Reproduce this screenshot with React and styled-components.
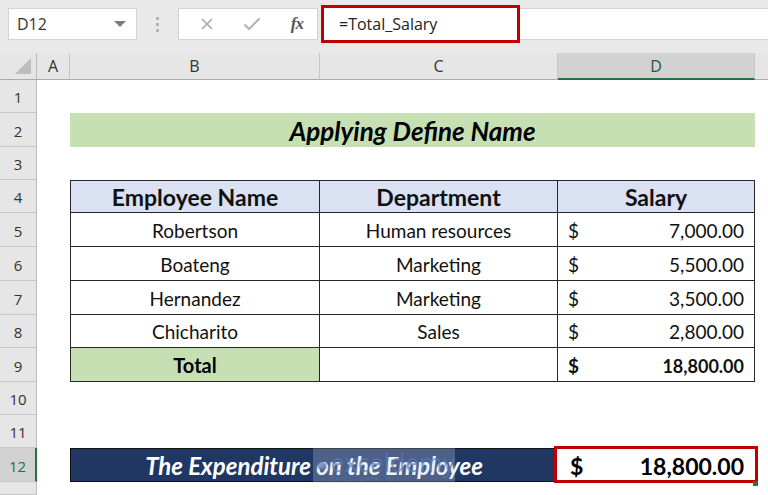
import React from 'react';
import styled, { createGlobalStyle } from 'styled-components';

const GlobalStyle = createGlobalStyle`
  html, body {
    margin: 0;
    padding: 0;
    background: #ffffff;
    overflow: hidden;
  }
  * {
    box-sizing: border-box;
  }
`;

const rowHeights = [33, 34, 33, 33, 34, 34, 34, 33, 34, 33, 33, 34];

const employees = [
  { name: 'Robertson', dept: 'Human resources', salary: '7,000.00' },
  { name: 'Boateng', dept: 'Marketing', salary: '5,500.00' },
  { name: 'Hernandez', dept: 'Marketing', salary: '3,500.00' },
  { name: 'Chicharito', dept: 'Sales', salary: '2,800.00' },
];

const App = () => {
  return (
    <Window>
      <GlobalStyle />
      <TopBar>
        <NameBox>
          <span>D12</span>
          <DropArrow />
        </NameBox>
        <Dots>
          <i />
          <i />
          <i />
        </Dots>
        <FxBox>
          <svg width="14" height="14" viewBox="0 0 14 14">
            <path d="M2 2 L12 12 M12 2 L2 12" stroke="#a8a8a8" strokeWidth="1.6" fill="none" />
          </svg>
          <svg width="18" height="14" viewBox="0 0 18 14">
            <path d="M1.5 7.5 L6 12 L16.5 1.5" stroke="#b4b4b4" strokeWidth="2.2" fill="none" />
          </svg>
          <FxLabel>fx</FxLabel>
        </FxBox>
        <FormulaField>
          <Highlight>=Total_Salary</Highlight>
        </FormulaField>
      </TopBar>

      <Sheet>
        <Corner>
          <svg width="16" height="16" viewBox="0 0 16 16">
            <path d="M16 0 L16 16 L0 16 Z" fill="#bdbdbd" />
          </svg>
        </Corner>
        {['A', 'B', 'C', 'D'].map((c) => (
          <ColHead key={c} $active={c === 'D'}>{c}</ColHead>
        ))}
        <ColHead $last />

        {rowHeights.map((_, i) => (
          <RowHead key={i} $row={i + 2} $active={i === 11}>{i + 1}</RowHead>
        ))}
        <RowHead $row={14} />

        <Title>Applying Define Name</Title>

        <HeadCell $row={5} $col={3} $left>Employee Name</HeadCell>
        <HeadCell $row={5} $col={4}>Department</HeadCell>
        <HeadCell $row={5} $col={5}>Salary</HeadCell>

        {employees.map((e, i) => (
          <React.Fragment key={e.name}>
            <BodyCell $row={i + 6} $col={3} $left>{e.name}</BodyCell>
            <BodyCell $row={i + 6} $col={4}>{e.dept}</BodyCell>
            <MoneyCell $row={i + 6}>
              <span>$</span>
              <span>{e.salary}</span>
            </MoneyCell>
          </React.Fragment>
        ))}

        <TotalLabel>Total</TotalLabel>
        <BodyCell $row={10} $col={4} />
        <MoneyCell $row={10} $bold>
          <span>$</span>
          <span>18,800.00</span>
        </MoneyCell>

        <Banner>The Expenditure on the Employee</Banner>
        <ResultCell>
          <ResultBox>
            <span>$</span>
            <span>18,800.00</span>
          </ResultBox>
          <FillHandle />
        </ResultCell>

        <Watermark>
          <svg width="30" height="30" viewBox="0 0 30 30">
            <path d="M15 2 L27 9 L27 22 L15 29 L3 22 L3 9 Z" fill="#5d76a8" opacity="0.7" />
            <path d="M15 9 L21 12.5 L21 19 L15 22.5 L9 19 L9 12.5 Z" fill="#8ea2c8" opacity="0.6" />
          </svg>
          <WatermarkText>
            exceldemy
            <small>EXCEL · DATA · BI</small>
          </WatermarkText>
        </Watermark>
      </Sheet>
    </Window>
  );
};

// styled components
const Window = styled.div`
  width: 768px;
  height: 495px;
  display: flex;
  flex-direction: column;
  background: #e9e9e9;
  font-family: 'Open Sans', 'Noto Sans', sans-serif;
  color: #222;
  overflow: hidden;
`;

const TopBar = styled.div`
  height: 53px;
  flex-shrink: 0;
  display: flex;
  align-items: flex-start;
  padding: 8px 0 0 8px;
  background: #e9e9e9;
`;

const NameBox = styled.div`
  width: 129px;
  height: 32px;
  display: flex;
  align-items: center;
  justify-content: space-between;
  padding: 0 10px 0 8px;
  background: #fff;
  border: 1px solid #d4d4d4;
  font-size: 16px;
  color: #333;
`;

const DropArrow = styled.i`
  width: 0;
  height: 0;
  border-left: 6px solid transparent;
  border-right: 6px solid transparent;
  border-top: 6px solid #7a7a7a;
`;

const Dots = styled.div`
  width: 41px;
  height: 32px;
  display: flex;
  flex-direction: column;
  align-items: center;
  justify-content: center;
  gap: 3px;

  i {
    width: 3px;
    height: 3px;
    background: #b5b5b5;
  }
`;

const FxBox = styled.div`
  width: 140px;
  height: 32px;
  display: flex;
  align-items: center;
  justify-content: space-between;
  padding: 0 14px 0 21px;
  background: #fff;
  border: 1px solid #d4d4d4;
`;

const FxLabel = styled.span`
  font-family: 'Liberation Serif', serif;
  font-style: italic;
  font-weight: bold;
  font-size: 17px;
  color: #555;
  letter-spacing: -1px;
`;

const FormulaField = styled.div`
  flex: 1;
  height: 32px;
  margin-left: 3px;
  background: #fff;
  border-top: 1px solid #d4d4d4;
  border-bottom: 1px solid #d4d4d4;
`;

const Highlight = styled.div`
  width: 199px;
  height: 38px;
  margin-top: -4px;
  display: flex;
  align-items: center;
  padding-left: 15px;
  border: 3px solid #c00000;
  background: #fff;
  font-size: 16px;
  color: #222;
`;

const Sheet = styled.div`
  position: relative;
  flex: 1;
  display: grid;
  grid-template-columns: 37px 33px 250px 238px 197px 1fr;
  grid-template-rows: 27px ${rowHeights.map((h) => `${h}px`).join(' ')} 1fr;
  background: #fff;
  font-family: 'Lato', 'Open Sans', sans-serif;
`;

const Corner = styled.div`
  grid-row: 1;
  grid-column: 1;
  display: flex;
  align-items: flex-end;
  justify-content: flex-end;
  padding: 0 5px 5px 0;
  background: #e6e6e6;
  border-right: 1px solid #bcbcbc;
  border-bottom: 1px solid #ababab;
`;

const ColHead = styled.div`
  display: flex;
  align-items: center;
  justify-content: center;
  background: ${(p) => (p.$active ? '#d2d2d2' : '#e6e6e6')};
  border-right: ${(p) => (p.$last ? 'none' : '1px solid #c6c6c6')};
  border-bottom: ${(p) => (p.$active ? '2px solid #217346' : '1px solid #ababab')};
  font-family: 'Open Sans', sans-serif;
  font-size: 16px;
  color: ${(p) => (p.$active ? '#1e5b35' : '#333')};
`;

const RowHead = styled.div`
  grid-row: ${(p) => p.$row};
  grid-column: 1;
  display: flex;
  align-items: center;
  justify-content: center;
  padding-top: 2px;
  background: ${(p) => (p.$active ? '#d2d2d2' : '#e6e6e6')};
  border-right: ${(p) => (p.$active ? '2px solid #217346' : '1px solid #bcbcbc')};
  border-bottom: 1px solid #c8c8c8;
  font-family: 'Open Sans', sans-serif;
  font-size: 15px;
  color: ${(p) => (p.$active ? '#217346' : '#333')};
`;

const Title = styled.div`
  grid-row: 3;
  grid-column: 3 / 6;
  display: flex;
  align-items: center;
  justify-content: center;
  padding-top: 1px;
  background: #c6e0b4;
  font-size: 26px;
  font-weight: 700;
  font-style: italic;
  color: #000;
`;

const Cell = styled.div`
  grid-row: ${(p) => p.$row};
  grid-column: ${(p) => p.$col};
  display: flex;
  justify-content: center;
  border-right: 1px solid #262626;
  border-bottom: 1px solid #262626;
  border-left: ${(p) => (p.$left ? '1px solid #262626' : 'none')};
`;

const HeadCell = styled(Cell)`
  align-items: center;
  background: #d9e1f2;
  border-top: 1px solid #262626;
  font-size: 23px;
  font-weight: 700;
  color: #111;
`;

const BodyCell = styled(Cell)`
  align-items: flex-end;
  padding-bottom: 4px;
  font-size: 19px;
  color: #111;
`;

const MoneyCell = styled(Cell)`
  grid-column: 5;
  align-items: flex-end;
  justify-content: space-between;
  padding: 0 10px 4px 10px;
  font-size: ${(p) => (p.$bold ? '18px' : '19px')};
  font-weight: ${(p) => (p.$bold ? 700 : 400)};
  color: #111;

  span:first-child {
    font-size: 19px;
  }
`;

const TotalLabel = styled(Cell).attrs({ $row: 10, $col: 3, $left: true })`
  align-items: center;
  background: #c6e0b4;
  font-size: 20px;
  font-weight: 700;
  color: #000;
`;

const Banner = styled.div`
  grid-row: 13;
  grid-column: 3 / 5;
  display: flex;
  align-items: center;
  justify-content: center;
  background: #203764;
  border: 1px solid #111;
  font-size: 24px;
  font-weight: 700;
  font-style: italic;
  color: #fff;
`;

const ResultCell = styled.div`
  position: relative;
  grid-row: 13;
  grid-column: 5;
  display: flex;
`;

const ResultBox = styled.div`
  flex: 1;
  margin: -2px -3px -1px -4px;
  display: flex;
  align-items: center;
  justify-content: space-between;
  padding: 2px 11px 0 13px;
  border: 3px solid #c00000;
  background: #fff;
  font-size: 23px;
  font-weight: 700;
  color: #000;
`;

const FillHandle = styled.i`
  position: absolute;
  right: -3px;
  bottom: -4px;
  width: 5px;
  height: 5px;
  background: #217346;
`;

const Watermark = styled.div`
  position: absolute;
  left: 313px;
  top: 395px;
  width: 142px;
  height: 35px;
  display: flex;
  align-items: center;
  gap: 3px;
  padding-left: 4px;
  background: rgba(190, 205, 230, 0.28);
  pointer-events: none;
`;

const WatermarkText = styled.div`
  display: flex;
  flex-direction: column;
  line-height: 1;
  font-family: 'Open Sans', sans-serif;
  font-size: 25px;
  color: rgba(90, 120, 185, 0.7);

  small {
    font-size: 6px;
    letter-spacing: 1px;
    margin-top: 1px;
  }
`;

export default App;
